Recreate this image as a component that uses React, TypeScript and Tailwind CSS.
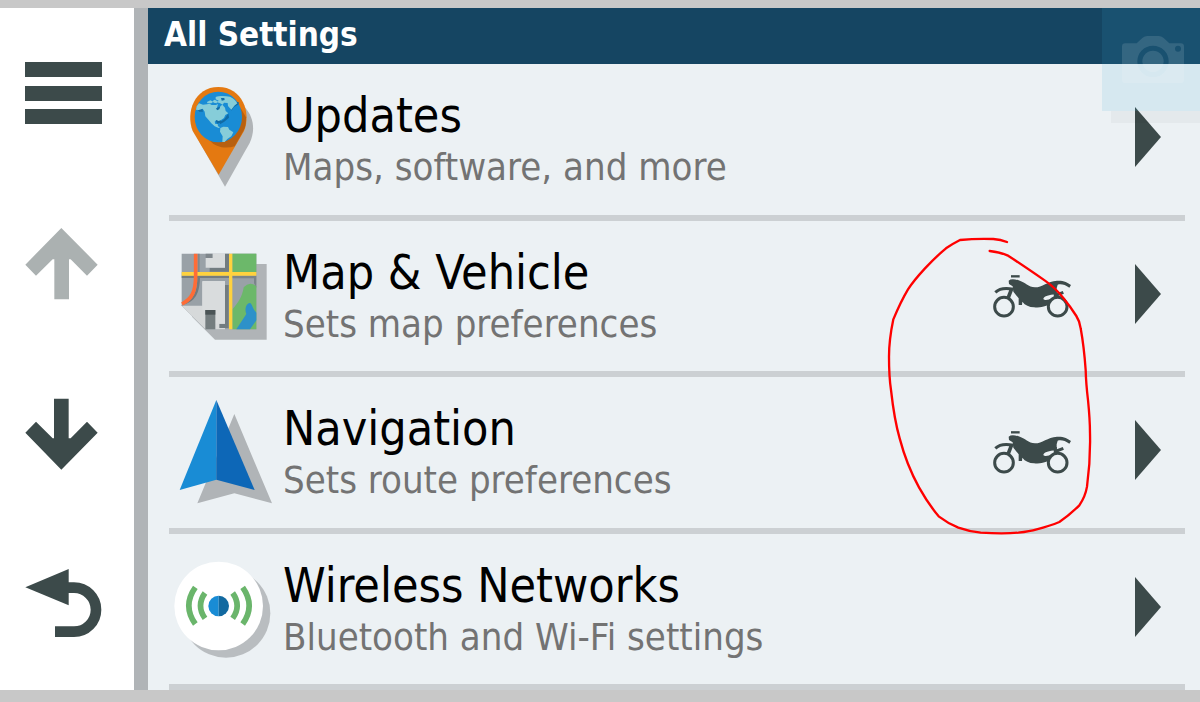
import { useState } from 'react';
import type { ReactNode } from 'react';

const MenuIcon = () => (
  <svg className="w-[77px] h-[62px]" viewBox="0 0 77 62" fill="currentColor">
    <path d="M0 0h77v15H0zM0 24h77v15H0zM0 47h77v15H0z" />
  </svg>
);

const UpIcon = () => (
  <svg className="w-[77px] h-[72px]" viewBox="75 51 231 216" fill="currentColor">
    <path d="M184 51L293 161L261 194L212 145H207V265H163V145H158L108 194L76 161Z" />
  </svg>
);

const DownIcon = () => (
  <svg className="w-[77px] h-[72px]" viewBox="75 565 231 216" fill="currentColor">
    <path d="M184 780L293 669L261 636L212 686H206V567H162V686H158L108 636L76 669Z" />
  </svg>
);

const BackIcon = () => (
  <svg className="w-[77px] h-[72px]" viewBox="75 57 231 216">
    <path d="M76 112L206 57V166Z" fill="currentColor" />
    <path d="M200 113H222A66 66 0 0 1 222 245H165" fill="none" stroke="currentColor" strokeWidth="32" />
  </svg>
);

const UpdatesIcon = () => (
  <svg className="w-[111px] h-[120px]" viewBox="-3 24 333 360">
    <path d="M165 353L90 222C50 150 100 90 165 90C230 90 269 160 239 222Z" fill="#b0b4b7" />
    <path d="M146 317L68 186C46 130 74 54 145 54C216 54 245 130 222 186Z" fill="#e47911" />
    <path d="M118 213L212 118L228 145C228 165 226 175 220 186L194 232C168 240 136 236 118 213Z" fill="#b8600f" />
    <ellipse cx="145" cy="144" rx="71" ry="76" fill="#198cd5" />
    <path
      d="M84 124L97 119L99 128L88 128ZM150 160L164 149L175 133L177 146L163 158L150 166ZM135 152L150 150L156 160L142 164ZM138 118L156 110L152 127L142 128ZM178 100L206 99L206 106L192 114L184 125ZM152 86L164 84L164 97L156 98Z"
      fill="#106ba5"
    />
    <path
      d="M78 122L80 112L87 103L99 107L111 106L119 104L125 108H138L144 105L141 116L138 118L141 124L148 121L151 112L157 107L165 116L167 126L175 133L166 138L162 147L152 154L146 156L139 153L134 158L136 165L143 165L144 172L150 175L146 177L134 172L124 163L116 153L106 142L104 128L98 119L86 123Z"
      fill="#86cdd9"
    />
    <path
      d="M111 99L121 94L130 98L124 103L112 103ZM129 95L134 92L143 97L140 103L131 101ZM137 84C148 80 166 81 180 83C191 88 200 98 202 103L193 110L184 122L174 111L173 102L162 101L158 107L149 102L140 100L146 95L137 91ZM153 87L155 95L164 93L163 87Z"
      fillRule="evenodd"
      fill="#86cdd9"
    />
    <path d="M151 177L160 173L174 174L178 182L190 190L184 202L172 210L164 219L157 219L158 202L150 188Z" fill="#86cdd9" />
  </svg>
);

const MapIcon = () => (
  <svg className="w-[111px] h-[120px]" viewBox="-3 -18 333 360">
    <path d="M66 72H290V299H135L66 230Z" fill="#b0b4b7" />
    <path d="M35 41H259V268H106L35 197Z" fill="#99a1a7" />
    <path d="M35 197L97 197V125H165V268H106Z" fill="#d6d9da" />
    <path d="M35 107H188V114H35z" fill="#747c80" />
    <path d="M165 41H178V95H165zM119 83H165V95H119zM165 135H176V264H165zM148 251H176V264H148z" fill="#727c80" />
    <path d="M35 195C76 186 90 160 90 107H82C82 160 70 178 35 197Z" fill="#727a7e" />
    <path d="M83 41H89V96H83zM107 41H128V54H107z" fill="#7f878c" />
    <path d="M128 41H165V83H107V54H128Z" fill="#d9dcdd" />
    <path d="M97 123H165V251H136V210H97Z" fill="#d9dcdd" />
    <path d="M106 210H136V268H106Z" fill="#747d7f" />
    <path d="M106 210H136V224H106Z" fill="#4b5456" />
    <path d="M187 41H259V96H187Z" fill="#6cb86a" />
    <path d="M187 107H259V143L252 130V115H187Z" fill="#7b8589" />
    <path d="M187 208C204 190 217 170 221 142Q239 122 259 139V268H187Z" fill="#6cb86a" />
    <path d="M199 268L229 222C222 206 231 188 240 189C248 193 247 206 259 218V241L240 268Z" fill="#2d91c9" />
    <path d="M35 96H259V107H35zM177 41H187V268H177z" fill="#ffd23e" />
    <path d="M77 41V105C77 156 66 176 36 192" fill="none" stroke="#ff6c36" strokeWidth="11" />
  </svg>
);

const NavigationIcon = () => (
  <svg className="w-[111px] h-[120px]" viewBox="-3 0 333 360">
    <path d="M193 72L306 340L193 310L82 340Z" fill="#b0b4b7" />
    <path d="M139 30V269L29 300Z" fill="#198cd5" />
    <path d="M139 30L254 300L139 269Z" fill="#0d67b7" />
  </svg>
);

const WirelessIcon = () => (
  <svg className="w-[111px] h-[120px]" viewBox="12 -9 333 360">
    <circle cx="183" cy="190" r="133" fill="#b9bdc0" />
    <circle cx="161" cy="168" r="133" fill="#fff" />
    <path d="M161 137a31 31 0 0 0 0 62z" fill="#198cd5" />
    <path d="M161 137a31 31 0 0 1 0 62z" fill="#1269a0" />
    <g fill="none" stroke="#6ab56b" strokeWidth="17">
      <path d="M91 112Q52 167 91 222M120 129Q93 167 120 205M203 129Q230 167 203 205M233 112Q272 167 233 222" />
    </g>
  </svg>
);

const MotorcycleIcon = () => (
  <svg className="w-[84px] h-[50px]" viewBox="30 16 252 150" fill="#3c4a4a">
    <g fill="none" stroke="#3c4a4a">
      <circle cx="72" cy="129" r="28" strokeWidth="9" />
      <circle cx="233" cy="129" r="28" strokeWidth="9" />
      <path d="M93 38H119" strokeWidth="7" />
      <path d="M46 86Q64 69 100 77" strokeWidth="9" />
      <path d="M94 78L84 104" strokeWidth="11" />
      <path d="M222 97L250 86M226 82V104" strokeWidth="9" />
    </g>
    <path d="M86 51Q94 43 116 50C136 56 145 71 165 71C187 71 202 53 231 51C251 50 263 56 273 64L268 72C255 63 243 60 233 63L230 74L230 93C213 92 191 97 190 106C195 112 207 108 216 104L205 124C190 130 178 133 162 131C148 130 135 125 127 114L126 124H116V104L100 84L98 68L87 61Z" />
  </svg>
);

const CameraIcon = () => (
  <svg className="w-[62px] h-[47px]" viewBox="0 0 186 141">
    <path
      fillRule="evenodd"
      fill="#fff"
      fillOpacity="0.12"
      d="M10 22H44L62 5Q68 0 76 0H110Q118 0 124 5L142 22H176Q186 22 186 32V131Q186 141 176 141H10Q0 141 0 131V32Q0 22 10 22ZM93 29A47 47 0 1 0 93 123A47 47 0 1 0 93 29ZM168 29A9 9 0 1 0 168 47A9 9 0 1 0 168 29Z"
    />
    <circle cx="93" cy="76" r="32" fill="#fff" fillOpacity="0.12" />
  </svg>
);

interface Setting {
  title: string;
  description: string;
  icon: ReactNode;
  vehicle?: boolean;
}

const settings: Setting[] = [
  { title: 'Updates', description: 'Maps, software, and more', icon: <UpdatesIcon /> },
  { title: 'Map & Vehicle', description: 'Sets map preferences', icon: <MapIcon />, vehicle: true },
  { title: 'Navigation', description: 'Sets route preferences', icon: <NavigationIcon />, vehicle: true },
  { title: 'Wireless Networks', description: 'Bluetooth and Wi-Fi settings', icon: <WirelessIcon /> },
];

const sideButtons = [
  { label: 'Menu', icon: <MenuIcon />, disabled: false },
  { label: 'Scroll up', icon: <UpIcon />, disabled: true },
  { label: 'Scroll down', icon: <DownIcon />, disabled: false },
  { label: 'Back', icon: <BackIcon />, disabled: false },
];

export default function App() {
  const [selected, setSelected] = useState<string | null>(null);

  return (
    <div className="flex min-h-screen flex-col border-t-8 border-b-12 border-[#c8c8c8] bg-[#ecf1f4] font-['DejaVu_Sans_Condensed','DejaVu_Sans',sans-serif]">
      <div className="flex flex-1">
        {/* Side buttons */}
        <nav className="flex w-[148px] shrink-0 flex-col border-r-14 border-[#b0b4b7] bg-white">
          {sideButtons.map((button) => (
            <button
              key={button.label}
              aria-label={button.label}
              disabled={button.disabled}
              className="flex flex-1 items-center justify-center pr-2 text-[#3c4a4a] disabled:text-[#abb1b1]"
            >
              {button.icon}
            </button>
          ))}
        </nav>

        <main className="relative flex min-w-0 flex-1 flex-col">
          <header className="flex h-14 items-center bg-[#154562] px-4 pb-0.5">
            <h1 className="text-[33px] leading-10 font-bold text-white">All Settings</h1>
          </header>

          {/* Settings list */}
          <ul className="flex flex-1 flex-col pr-[15px] pl-[21px]">
            {settings.map((item) => (
              <li key={item.title} className="flex flex-1 border-b-6 border-[#ccd0d3]">
                <button
                  onClick={() => setSelected(item.title)}
                  aria-pressed={selected === item.title}
                  className="flex flex-1 items-center pr-6 pb-1 text-left"
                >
                  {item.icon}
                  <span className="flex flex-1 flex-col pt-1 pl-[3px] whitespace-nowrap">
                    <span className="text-[48px] leading-14 text-black">{item.title}</span>
                    <span className="text-[38px] leading-12 text-[#737373]">{item.description}</span>
                  </span>
                  {item.vehicle && <MotorcycleIcon />}
                  <svg className="ml-[61px] h-[60px] w-[26px]" viewBox="0 0 26 60" fill="#3c4a4a">
                    <path d="M0 0L26 30L0 60Z" />
                  </svg>
                </button>
              </li>
            ))}
          </ul>

          {/* Screenshot button */}
          <button
            aria-label="Take screenshot"
            className="absolute top-0 right-0 flex h-[103px] w-[98px] items-center justify-center bg-[#3caad7]/12 pl-1"
          >
            <CameraIcon />
          </button>
          <div className="pointer-events-none absolute top-[103px] right-0 h-3 w-[89px] bg-black/3" />

          {/* Hand drawn loop round the vehicle icons */}
          <svg
            className="pointer-events-none absolute top-[224px] right-[105px] h-[308px] w-[210px]"
            viewBox="45 36 630 924"
            fill="none"
            stroke="#ff0000"
            strokeWidth="7"
            strokeLinecap="round"
            strokeLinejoin="round"
          >
            <path d="M411 66Q392 58 370 57Q320 55 270 60Q250 70 228 85Q200 108 165 145Q130 183 114 208Q92 245 70 298Q57 360 57 410Q57 470 63 510Q73 600 89 655Q110 735 147 802Q175 852 206 889Q235 911 265 923Q295 934 332 938Q400 942 445 938Q480 934 500 928Q540 918 568 906Q600 884 628 856Q646 830 651 800Q662 720 660 640Q660 600 654 540Q648 490 647 450Q642 380 632 325Q630 305 619 288Q600 258 580 234Q555 203 525 182Q450 130 412 106Q390 97 359 93" />
          </svg>
        </main>
      </div>
    </div>
  );
}
